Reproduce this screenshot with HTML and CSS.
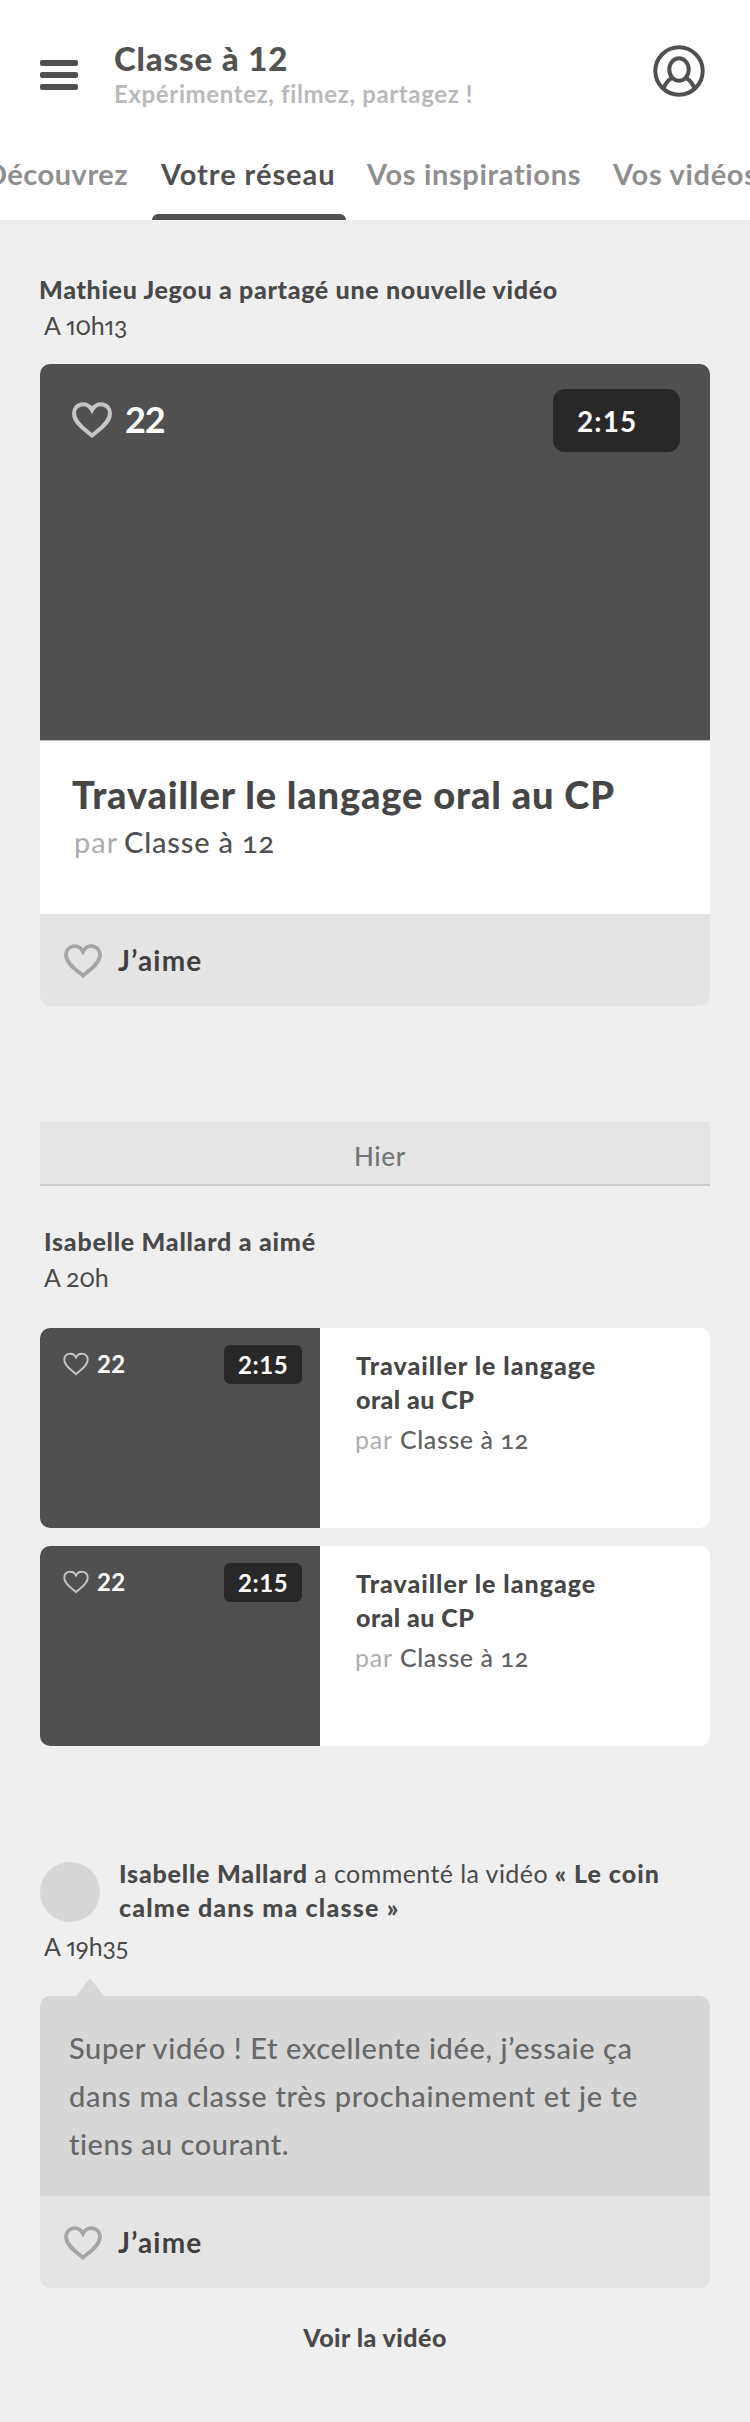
FILE: index.html
```html
<!DOCTYPE html>
<html lang="fr">
<head>
<meta charset="utf-8">
<title>Classe à 12</title>
<link rel="stylesheet" href="styles.css">
</head>
<body>
<svg width="0" height="0" class="defs">
  <symbol id="heart" viewBox="0 0 40 36"><path d="M20 33.500 C15.500 29.500 2 21.500 2 11.500 C2 1.500 15 -1.500 20 8 C25 -1.500 38 1.500 38 11.500 C38 21.500 24.500 29.500 20 33.500Z"/></symbol>
</svg>
<header class="header">
  <div class="topbar">
    <div class="burger"><i></i><i></i><i></i></div>
    <div class="brand">
      <h1 class="brand-name">Classe à 12</h1>
      <p class="brand-tag">Expérimentez, filmez, partagez !</p>
    </div>
    <svg class="profile" viewBox="0 0 52 52"><circle cx="26" cy="26" r="23.700"/><ellipse cx="26" cy="24.500" rx="9.700" ry="11.300"/><path d="M10.500 43.500C12.500 38.500 15 35 19 33M41.500 43.500C39.500 38.500 37 35 33 33"/></svg>
  </div>
  <nav class="tabs">
    <a class="tab tab-1">Découvrez</a>
    <a class="tab tab-2 active">Votre réseau</a>
    <a class="tab tab-3">Vos inspirations</a>
    <a class="tab tab-4">Vos vidéos</a>
  </nav>
</header>
<main class="feed">
  <h2 class="event share">Mathieu Jegou a partagé une nouvelle vidéo</h2>
  <p class="time time-1">A 10h13</p>
  <article class="video">
    <div class="poster">
      <div class="likes"><svg class="heart"><use href="#heart"/></svg><span>22</span></div>
      <span class="badge">2:15</span>
    </div>
    <div class="info">
      <h3 class="video-title">Travailler le langage oral au CP</h3>
      <p class="author"><span class="by">par</span><span class="who">Classe à 12</span></p>
    </div>
    <div class="like-bar"><svg class="heart"><use href="#heart"/></svg><span>J’aime</span></div>
  </article>
  <div class="day"><span>Hier</span></div>
  <h2 class="event liked">Isabelle Mallard a aimé</h2>
  <p class="time time-2">A 20h</p>
  <div class="cards">
    <article class="card">
      <div class="thumb">
        <div class="likes"><svg class="heart"><use href="#heart"/></svg><span>22</span></div>
        <span class="badge">2:15</span>
      </div>
      <div class="card-info">
        <h3 class="card-title"><span class="l1">Travailler le langage</span><br><span class="l2">oral au CP</span></h3>
        <p class="author"><span class="by">par</span><span class="who">Classe à 12</span></p>
      </div>
    </article>
    <article class="card">
      <div class="thumb">
        <div class="likes"><svg class="heart"><use href="#heart"/></svg><span>22</span></div>
        <span class="badge">2:15</span>
      </div>
      <div class="card-info">
        <h3 class="card-title"><span class="l1">Travailler le langage</span><br><span class="l2">oral au CP</span></h3>
        <p class="author"><span class="by">par</span><span class="who">Classe à 12</span></p>
      </div>
    </article>
  </div>
  <div class="comment-head">
    <div class="avatar"></div>
    <p class="comment-event"><b class="name">Isabelle Mallard</b> <span class="verb">a commenté la vidéo</span> <b class="t1">« Le coin</b><br><b class="t2">calme dans ma classe »</b></p>
  </div>
  <p class="time time-3">A 19h35</p>
  <svg class="arrow" viewBox="0 0 28 18"><path d="M0 18L14 0L28 18Z"/></svg>
  <article class="comment">
    <p class="bubble"><span class="c1">Super vidéo ! Et excellente idée, j’essaie ça</span><br><span class="c2">dans ma classe très prochainement et je te</span><br><span class="c3">tiens au courant.</span></p>
    <div class="like-bar"><svg class="heart"><use href="#heart"/></svg><span>J’aime</span></div>
  </article>
  <a class="more">Voir la vidéo</a>
</main>
</body>
</html>
```
FILE: styles.css
```css
* { box-sizing: border-box; margin: 0; padding: 0; }
body {
  width: 750px; height: 2422px; overflow: hidden;
  background: #efefef; color: #494949;
  font-family: Lato, sans-serif; font-variant-ligatures: none; white-space: nowrap;
}
.defs { display: block; }

.header { height: 220px; background: #fff; overflow: hidden; }
.topbar { display: flex; height: 146px; padding-left: 40px; }
.burger { display: flex; flex-direction: column; gap: 6px; width: 38px; padding-top: 60px; }
.burger i { height: 6px; border-radius: 2px; background: #505050; }
.brand { width: 575px; padding: 38px 0 0 36px; }
.brand-name { font-size: 33px; font-weight: 900; line-height: 40px; letter-spacing: .85px; color: #535353; }
.brand-tag { font-size: 24px; font-weight: 700; line-height: 31px; letter-spacing: .63px; color: #b9b9b9; }
.profile { width: 52px; height: 52px; margin-top: 45px; fill: none; stroke: #505050; stroke-width: 4; }

.tabs { display: grid; grid-template-columns: 176px 206px 246px 1fr; width: 790px; height: 74px; margin-left: -15px; }
.tab { font-size: 29px; font-weight: 700; line-height: 34px; padding-top: 11px; color: #8f8f8f; }
.tab-1 { letter-spacing: .5px; }
.tab-2 { letter-spacing: .95px; }
.tab-3 { letter-spacing: .65px; }
.tab-4 { letter-spacing: .7px; }
.tab.active { color: #505050; }
.tab.active::after { content: ""; display: block; width: 194px; height: 6px; margin: 23px 0 0 -9px; border-radius: 6px 6px 0 0; background: #505050; }

.feed { padding: 0 40px; }
.event { font-size: 25px; font-weight: 900; line-height: 36px; }
.share { padding-top: 51px; margin-left: -1px; letter-spacing: .68px; }
.time { font-size: 25px; line-height: 36px; padding-left: 4px; font-feature-settings: "onum", "pnum"; }
.time-1 { letter-spacing: -.3px; }
.time-2 { letter-spacing: -.3px; }
.time-3 { letter-spacing: -.1px; margin-top: 4px; }

.heart { display: block; flex: none; fill: none; stroke-width: 4; }
.likes { display: flex; align-items: flex-start; color: #fff; font-weight: 700; }
.likes .heart { stroke: #c6c6c6; }
.badge { background: #282828; color: #fff; font-weight: 700; border-radius: 12px; }

.video { margin-top: 21px; border-radius: 10px; overflow: hidden; background: #fff; }
.poster { display: flex; justify-content: space-between; align-items: flex-start; height: 377px; padding: 25px 30px 0 32px; background: #505050; border-bottom: 1px solid #bdbdbd; }
.poster .likes { padding-top: 13px; font-size: 36px; line-height: 36px; letter-spacing: -1.2px; }
.poster .heart { width: 40px; height: 36px; }
.poster .likes span { margin: -1px 0 0 13px; }
.poster .badge { width: 127px; height: 63px; padding-left: 24px; font-size: 28px; line-height: 64px; letter-spacing: 1.1px; }
.info { height: 173px; padding: 29px 0 0 32px; }
.video-title { font-size: 38px; font-weight: 900; line-height: 48px; letter-spacing: .86px; color: #464646; }
.author { display: flex; }
.by { color: #adadad; letter-spacing: 1px; }
.who { font-weight: 500; color: #505050; font-feature-settings: "onum"; }
.info .author { padding-left: 2px; font-size: 29px; line-height: 48px; }
.info .by { width: 50px; }
.info .who { letter-spacing: .85px; }
.like-bar { display: flex; align-items: flex-start; height: 92px; padding: 30px 0 0 24px; background: #e4e4e4; font-size: 28px; font-weight: 700; color: #404040; }
.like-bar .heart { width: 38px; height: 34px; stroke: #a5a5a5; }
.like-bar span { margin-left: 16px; line-height: 32px; letter-spacing: 1.2px; }

.day { display: flex; justify-content: center; height: 64px; margin-top: 116px; padding: 18px 0 0 10px; background: #e5e5e5; border-bottom: 2px solid #cbcbcb; font-size: 26px; line-height: 33px; letter-spacing: .7px; color: #757575; font-weight: 500; }
.liked { padding-left: 4px; margin-top: 37px; letter-spacing: .75px; }

.cards { display: grid; gap: 18px; margin-top: 33px; }
.card { display: flex; height: 200px; border-radius: 10px; overflow: hidden; background: #fff; }
.thumb { display: flex; justify-content: space-between; align-items: flex-start; width: 280px; padding: 17px 18px 0 23px; background: #505050; }
.thumb .likes { padding-top: 7px; font-size: 24px; line-height: 24px; letter-spacing: .3px; }
.thumb .heart { width: 26px; height: 24px; stroke-width: 3; }
.thumb .likes span { margin-left: 8px; }
.thumb .badge { width: 78px; height: 39px; border-radius: 6px; padding-left: 14px; font-size: 24px; line-height: 40px; letter-spacing: .6px; }
.card-info { padding: 20px 0 0 36px; }
.card-title { font-size: 25px; font-weight: 900; line-height: 34px; color: #464646; }
.l1 { letter-spacing: 1px; }
.l2 { letter-spacing: .45px; }
.card .author { font-size: 25px; line-height: 36px; margin: 5px 0 0 -1px; }
.card .by { width: 45px; letter-spacing: .8px; }
.card .who { color: #606060; letter-spacing: .6px; }

.comment-head { display: flex; margin-top: 116px; }
.avatar { width: 60px; height: 60px; border-radius: 50%; background: #d7d7d7; }
.comment-event { height: 68px; margin: -6px 0 0 19px; font-size: 25px; line-height: 34px; }
.comment-event b { font-weight: 900; }
.name { letter-spacing: .8px; }
.verb { letter-spacing: .42px; }
.t1 { letter-spacing: 1px; }
.t2 { letter-spacing: 1.2px; }
.arrow { display: block; width: 28px; height: 18px; margin: 14px 0 0 36px; fill: #d7d7d7; }
.comment { border-radius: 10px; overflow: hidden; }
.bubble { height: 200px; padding: 28px 0 0 29px; background: #d7d7d7; font-size: 29px; font-weight: 500; line-height: 48px; color: #686868; }
.c1 { letter-spacing: .6px; }
.c2 { letter-spacing: .7px; }
.c3 { letter-spacing: .5px; }
.more { display: block; margin-top: 31px; text-align: center; font-size: 25px; font-weight: 900; line-height: 36px; letter-spacing: .45px; }
```
